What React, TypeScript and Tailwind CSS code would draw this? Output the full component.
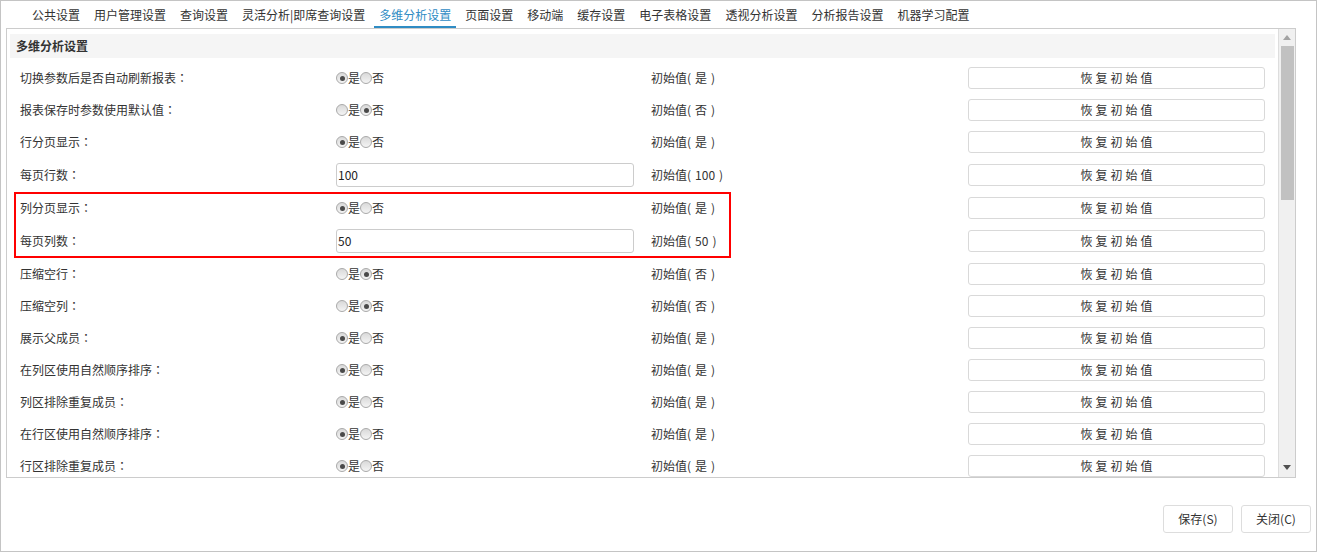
import React from "react";

const tabs = [
  "公共设置",
  "用户管理设置",
  "查询设置",
  "灵活分析|即席查询设置",
  "多维分析设置",
  "页面设置",
  "移动端",
  "缓存设置",
  "电子表格设置",
  "透视分析设置",
  "分析报告设置",
  "机器学习配置",
];

type Row =
  | { label: string; kind: "radio"; yes: boolean }
  | { label: string; kind: "input"; value: string };

const rowsA: Row[] = [
  { label: "切换参数后是否自动刷新报表", kind: "radio", yes: true },
  { label: "报表保存时参数使用默认值", kind: "radio", yes: false },
  { label: "行分页显示", kind: "radio", yes: true },
  { label: "每页行数", kind: "input", value: "100" },
];
const rowsB: Row[] = [
  { label: "列分页显示", kind: "radio", yes: true },
  { label: "每页列数", kind: "input", value: "50" },
];
const rowsC: Row[] = [
  { label: "压缩空行", kind: "radio", yes: false },
  { label: "压缩空列", kind: "radio", yes: false },
  { label: "展示父成员", kind: "radio", yes: true },
  { label: "在列区使用自然顺序排序", kind: "radio", yes: true },
  { label: "列区排除重复成员", kind: "radio", yes: true },
  { label: "在行区使用自然顺序排序", kind: "radio", yes: true },
  { label: "行区排除重复成员", kind: "radio", yes: true },
];

function Radio({ checked }: { checked: boolean }) {
  return (
    <span className="inline-flex w-[12px] h-[12px] rounded-full border border-[#a9a9a9] bg-gradient-to-b from-[#d9d9d9] to-[#f4f4f4] items-center justify-center shrink-0">
      {checked && <span className="w-[5px] h-[5px] rounded-full bg-[#4a4a4a]" />}
    </span>
  );
}

function SettingRow({ row }: { row: Row }) {
  const init =
    row.kind === "radio" ? (row.yes ? "是" : "否") : row.value;
  return (
    <div className="flex items-center py-[5px] pl-[10px] pr-[10px]">
      <div className="w-[316px] shrink-0">
        {row.label}
        <span className="font-['Noto_Sans_CJK_TC',sans-serif]">：</span>
      </div>
      <div className="w-[298px] shrink-0 flex items-center">
        {row.kind === "radio" ? (
          <>
            <Radio checked={row.yes} />
            <span>是</span>
            <Radio checked={!row.yes} />
            <span>否</span>
          </>
        ) : (
          <div className="w-[298px] h-[24px] border border-[#cccccc] rounded-[3px] px-[1px] flex items-center text-[#222]">
            {row.value}
          </div>
        )}
      </div>
      <div className="w-[17px] shrink-0" />
      <div className="w-[317px] shrink-0">
        初始值(<span className="inline-block w-[4px]" />
        {init}
        <span className="inline-block w-[4px]" />)
      </div>
      <div className="w-[297px] h-[22px] shrink-0 border border-[#d9d9d9] rounded-[3px] flex items-center justify-center tracking-[3px] pl-[3px] text-[#333]">
        恢复初始值
      </div>
    </div>
  );
}

export default function App() {
  return (
    <div className="w-[1317px] h-[552px] border border-[#c4c4c4] bg-white flex flex-col text-[12px] leading-[14px] text-[#333] font-['Noto_Sans_CJK_SC','Liberation_Sans',sans-serif] overflow-hidden">
      <div className="ml-[5px] mr-[20px] flex flex-col">
        <div className="h-[27px] flex pl-[21px] gap-[4px]">
          {tabs.map((t) => {
            const active = t === "多维分析设置";
            return (
              <div
                key={t}
                className={
                  active
                    ? "h-[27px] px-[5px] pt-[7px] border-b-2 border-[#2f8cc4] text-[#2f8cc4] whitespace-nowrap"
                    : "h-[27px] px-[5px] pt-[7px] border-b-2 border-transparent whitespace-nowrap"
                }
              >
                {t}
              </div>
            );
          })}
        </div>
        <div className="h-[450px] border border-[#cccccc] flex">
          <div className="flex-1 overflow-hidden pl-[3px] pr-[3px] pt-[5px]">
            <div className="h-[24px] bg-[#f5f5f5] pl-[6px] flex items-center font-bold">
              多维分析设置
            </div>
            <div className="mt-[4px]">
              {rowsA.map((r) => (
                <SettingRow key={r.label} row={r} />
              ))}
              <div className="relative">
                {rowsB.map((r) => (
                  <SettingRow key={r.label} row={r} />
                ))}
                <div className="absolute left-[4px] top-0 w-[717px] h-full border-2 border-[#ff0000] pointer-events-none" />
              </div>
              {rowsC.map((r) => (
                <SettingRow key={r.label} row={r} />
              ))}
            </div>
          </div>
          <div className="w-[17px] shrink-0 border-l border-[#dddddd] bg-[#f0f0f0] flex flex-col items-center">
            <div className="h-[17px] w-full flex items-center justify-center">
              <svg width="8" height="5" viewBox="0 0 8 5">
                <path d="M0 5 L4 0 L8 5 Z" fill="#a3a3a3" />
              </svg>
            </div>
            <div className="w-[13px] h-[154px] bg-[#c1c1c1]" />
            <div className="flex-1" />
            <div className="h-[20px] w-full flex items-center justify-center">
              <svg width="8" height="5" viewBox="0 0 8 5">
                <path d="M0 0 L8 0 L4 5 Z" fill="#505050" />
              </svg>
            </div>
          </div>
        </div>
      </div>
      <div className="flex justify-end gap-[8px] pt-[27px] pr-[5px]">
        <div className="w-[70px] h-[28px] border border-[#dddddd] rounded-[3px] flex items-center justify-center">
          保存(S)
        </div>
        <div className="w-[70px] h-[28px] border border-[#dddddd] rounded-[3px] flex items-center justify-center">
          关闭(C)
        </div>
      </div>
    </div>
  );
}
